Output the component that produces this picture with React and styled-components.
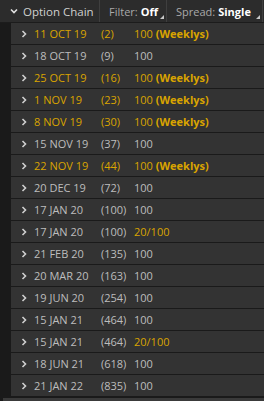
import React from 'react'
import styled, { createGlobalStyle } from 'styled-components'

const GlobalStyle = createGlobalStyle`
  html, body {
    margin: 0;
    padding: 0;
    background: #1a1a1a;
  }
  body {
    font-family: "Open Sans", "DejaVu Sans", sans-serif;
    font-size: 11px;
  }
`

const Panel = styled.div`
  width: 264px;
  height: 401px;
  display: flex;
  flex-direction: column;
  background: #1a1a1a;
  overflow: hidden;
`

const Header = styled.div`
  height: 22px;
  display: flex;
  align-items: stretch;
  background: #2c2c2c;
  border-bottom: 1px solid #1c1c1c;
  flex-shrink: 0;
`

const HeaderCell = styled.div`
  position: relative;
  display: flex;
  align-items: center;
  flex: 0 0 ${(p) => p.w}px;
  padding-left: ${(p) => p.pl}px;
  box-sizing: border-box;
  border-right: 1px solid #3f3f3f;
  color: #a9a9a9;
  font-size: 11px;
  white-space: nowrap;
  overflow: hidden;

  b {
    color: #ffffff;
    font-weight: 700;
    margin-left: 3px;
  }
`

const Title = styled.span`
  color: #d0d0d0;
  font-size: 11.5px;
  margin-left: 5px;
`

const Corner = styled.span`
  position: absolute;
  right: 2px;
  bottom: 3px;
  width: 0;
  height: 0;
  border-left: 4px solid transparent;
  border-bottom: 4px solid #c8c8c8;
`

const List = styled.div`
  flex: 1;
  display: flex;
  flex-direction: column;
  gap: 1px;
  padding-left: 11px;
`

const Row = styled.div`
  height: 21px;
  flex-shrink: 0;
  display: flex;
  align-items: center;
  background: #333333;
  color: ${(p) => (p.weekly ? '#d9a400' : '#bdbdbd')};
  font-size: 11px;
  white-space: nowrap;
`

const Chevron = styled.span`
  width: 21px;
  display: flex;
  justify-content: center;
  padding-left: 2px;
`

const DateCell = styled.span`
  width: 67px;
`

const Count = styled.span`
  width: 33px;
`

const Value = styled.span`
  color: ${(p) => (p.hl ? '#d9a400' : 'inherit')};

  b {
    font-weight: 700;
  }
`

const Scrollbar = styled.div`
  height: 3px;
  margin: 1px 0 0 3px;
  background: #3a3a3a;
  flex-shrink: 0;
`

const rows = [
  ['11 OCT 19', '(2)', '100', true],
  ['18 OCT 19', '(9)', '100', false],
  ['25 OCT 19', '(16)', '100', true],
  ['1 NOV 19', '(23)', '100', true],
  ['8 NOV 19', '(30)', '100', true],
  ['15 NOV 19', '(37)', '100', false],
  ['22 NOV 19', '(44)', '100', true],
  ['20 DEC 19', '(72)', '100', false],
  ['17 JAN 20', '(100)', '100', false],
  ['17 JAN 20', '(100)', '20/100', false],
  ['21 FEB 20', '(135)', '100', false],
  ['20 MAR 20', '(163)', '100', false],
  ['19 JUN 20', '(254)', '100', false],
  ['15 JAN 21', '(464)', '100', false],
  ['15 JAN 21', '(464)', '20/100', false],
  ['18 JUN 21', '(618)', '100', false],
  ['21 JAN 22', '(835)', '100', false],
]

const Arrow = ({ down }) => (
  <svg width="8" height="8" viewBox="0 0 8 8">
    {down ? (
      <path d="M1 2.5 L4 5.5 L7 2.5" fill="none" stroke="#e0e0e0" strokeWidth="1.6" />
    ) : (
      <path d="M2.5 1 L5.5 4 L2.5 7" fill="none" stroke="#cfcfcf" strokeWidth="1.6" />
    )}
  </svg>
)

export default function App() {
  return (
    <Panel>
      <GlobalStyle />
      <Header>
        <HeaderCell w={100} pl={10}>
          <Arrow down />
          <Title>Option Chain</Title>
        </HeaderCell>
        <HeaderCell w={67} pl={9}>
          Filter:<b>Off</b>
          <Corner />
        </HeaderCell>
        <HeaderCell w={96} pl={9}>
          Spread:<b>Single</b>
          <Corner />
        </HeaderCell>
      </Header>
      <List>
        {rows.map(([date, count, value, weekly], i) => (
          <Row key={i} weekly={weekly}>
            <Chevron>
              <Arrow />
            </Chevron>
            <DateCell>{date}</DateCell>
            <Count>{count}</Count>
            <Value hl={value === '20/100'}>
              {value}
              {weekly && <b> (Weeklys)</b>}
            </Value>
          </Row>
        ))}
      </List>
      <Scrollbar />
    </Panel>
  )
}
